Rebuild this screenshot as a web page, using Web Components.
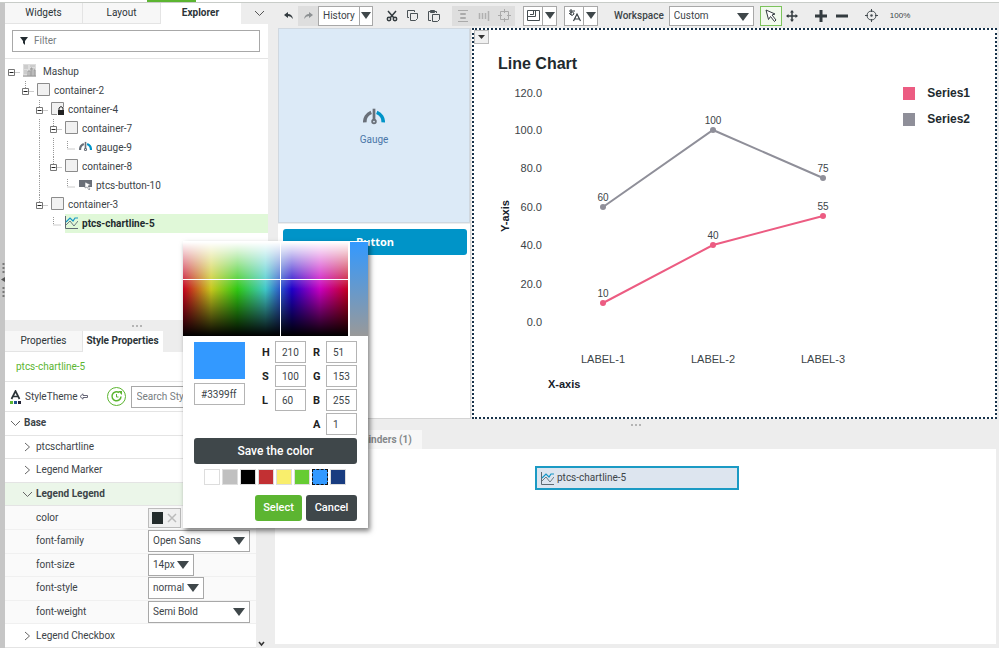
<!DOCTYPE html>
<html lang="en">
<head>
<meta charset="utf-8">
<meta name="viewport" content="width=device-width, initial-scale=1">
<title>Mashup Builder</title>
<style>
html, body {
  margin: 0;
  height: 100%;
}
body {
  --ink: #3c4448;
  --line: #e4e4e4;
  --field: #a8a8a8;
  --shade: #ededed;
  --green: #5cb531;
  --green-bg: #ebf6e9;
  --blue: #0094c8;
  --dark: #3f474a;
  font: 10px/14px Roboto, "Liberation Sans", sans-serif;
  color: var(--ink);
  background: var(--shade);
  overflow: hidden;
}
</style>
</head>
<body>
<mashup-builder></mashup-builder>

<script>
const baseStyles = `
* { box-sizing: border-box; }
button, input, select { font: inherit; color: inherit; margin: 0; }
button { padding: 0; border: 0; background: none; }
svg { display: block; flex: none; }
`;

const dropStyles = `
.drop { position: relative; display: flex; }
.drop select {
  appearance: none;
  width: 100%;
  height: 22px;
  padding: 0 16px 0 4px;
  border: 1px solid var(--field);
  border-radius: 0;
  background: #fff;
}
.drop:after {
  content: '';
  position: absolute;
  right: 5px;
  top: 7px;
  border: 6px solid transparent;
  border-top: 8px solid var(--dark);
  border-bottom: 0;
  pointer-events: none;
}
`;

const icons = {
  mashup: `<svg width="13" height="13"><path d="M0 0h13v13H0z" fill="#ddd"/><path d="M1 2h4M7 2h5M1 4h4M7 5h5M1 7h3M1 9h3" stroke="#bbb"/><path d="M5 12V7h2v5M8 12V4h1v8M11 12V6h1v6M0 12h13" stroke="#999" fill="none"/></svg>`,
  container: `<svg width="13" height="13"><path d="M.5.5h12v12H.5z" fill="#f1f1f1" stroke="#8b8b8b"/></svg>`,
  locked: `<svg width="13" height="13"><path d="M6 12.500H.5V.5h12v5" fill="#f1f1f1" stroke="#8b8b8b"/><path d="M7 8h6v5H7z" fill="#222"/><path d="M8 9V6q2-3 4 0v3" fill="none" stroke="#222"/></svg>`,
  gauge: `<svg width="13" height="13" viewBox="0 0 24 17"><path d="M2 15A11 11 0 0 1 9 4" fill="none" stroke="#6a7079" stroke-width="4"/><path d="M15 4a11 11 0 0 1 7 11" fill="none" stroke="#0094c8" stroke-width="4"/><path d="M12 0v12" stroke="#6a7079" stroke-width="3"/><circle cx="12" cy="14" r="2" fill="none" stroke="#6a7079" stroke-width="2"/></svg>`,
  button: `<svg width="13" height="10"><path d="M0 0h13v7H0z" fill="#6a6f78"/><path d="M6 2l6 3-3 1 2 3-1 1-2-3-2 1z" fill="#fff" stroke="#6a6f78" stroke-width=".6"/></svg>`,
  chart: `<svg width="13" height="13"><path d="M.5 0v12.500H13" fill="none" stroke="#5f6a72"/><path d="M1 6l4-4 3 3 2-3h3" fill="none" stroke="#1696c6" stroke-width="1.200"/><path d="M1 9l4-4 4 5 4-5" fill="none" stroke="#6c7a80"/></svg>`,
  filter: `<svg width="8" height="8"><path d="M0 0h8L5 4v4L3 6V4z" fill="#222b30"/></svg>`,
  chevron: `<svg width="11" height="7"><path d="M1 1l4.500 4.500L10 1" fill="none" stroke="#555"/></svg>`,
  right: `<svg width="11" height="10"><path d="M3 1l4.500 4L3 9" fill="none" stroke="#666"/></svg>`,
  down: `<svg width="11" height="10"><path d="M1 3l4.500 4.500L10 3" fill="none" stroke="#666"/></svg>`,
  undo: `<svg width="9" height="8"><path d="M0 3l4-3v2q4 0 5 5-2-3-5-3v2z" fill="#333b3f"/></svg>`,
  redo: `<svg width="9" height="8"><path d="M9 3L5 0v2Q1 2 0 7q2-3 5-3v2z" fill="#8d9193"/></svg>`,
  cut: `<svg width="12" height="12"><g fill="none" stroke="#333b3f" stroke-width="1.500"><path d="M2 1l6 7M10 1L4 8"/><circle cx="3" cy="9" r="1.700"/><circle cx="9" cy="9" r="1.700"/></g></svg>`,
  copy: `<svg width="13" height="13"><g fill="none" stroke="#4a5256"><path d="M3 8.500H1.500v-7h7V3"/><path d="M4.500 4.500h7v5l-2 2h-5z"/></g></svg>`,
  paste: `<svg width="13" height="13"><g fill="none" stroke="#4a5256"><path d="M4 11.500H1.500v-9h2M8 2.500h1.500V4"/><path d="M3.500 1.500h4v2h-4z" fill="#4a5256"/><path d="M5.500 5.500h7v5l-2 2h-5z"/></g></svg>`,
  rows: `<svg width="12" height="12"><path d="M1 .5h10M1 11.500h10M3.500 3.500h5v1h-5zM3.500 7.500h5v1h-5z" stroke="#aaa" fill="none"/></svg>`,
  cols: `<svg width="12" height="12"><path d="M1.500 3v6M4.500 3v6M7.500 3v6M10.500 1v10" stroke="#b0b0b0" stroke-width="1.500"/></svg>`,
  center: `<svg width="13" height="13"><path d="M2.500 2.500h8v8h-8zM6.500 0v4M6.500 9v4M0 6.500h4M9 6.500h4" fill="none" stroke="#aaa"/></svg>`,
  panes: `<svg width="13" height="11"><path d="M.5.5h12v10H.5zM.5 6.500h8V.5M3 4.500h3.500V1" fill="none" stroke="#444c50"/></svg>`,
  lang: `<svg width="13" height="13"><path d="M1 2h6M3 0v6M1 5q4-4 5 0-2 3-4 0" fill="none" stroke="#333b3f"/><path d="M5.500 12L9 5l3.500 7M6.500 10h5" fill="none" stroke="#333b3f" stroke-width="1.200"/></svg>`,
  pointer: `<svg width="14" height="14"><path d="M2 1l9 4-3 1 4 5-1.500 1.500-4-5-2 3z" fill="#fff" stroke="#333b3f"/></svg>`,
  move: `<svg width="12" height="12"><path d="M6 1v10M1 6h10" stroke="#333b3f" stroke-width="1.500"/><path d="M6 0l2 2.500H4zM6 12l2-2.500H4zM0 6l2.500-2v4zM12 6L9.500 4v4z" fill="#333b3f"/></svg>`,
  plus: `<svg width="12" height="12"><path d="M6 0v12M0 6h12" stroke="#333b3f" stroke-width="3"/></svg>`,
  minus: `<svg width="12" height="12"><path d="M0 6h12" stroke="#333b3f" stroke-width="3"/></svg>`,
  target: `<svg width="13" height="13"><circle cx="6.500" cy="6.500" r="4.500" fill="none" stroke="#444c50"/><circle cx="6.500" cy="6.500" r="1.200" fill="#444c50"/><path d="M6.500 0v3M6.500 10v3M0 6.500h3M10 6.500h3" stroke="#444c50"/></svg>`,
  refresh: `<svg width="19" height="19"><circle cx="9.500" cy="9.500" r="9" fill="none" stroke="#5cb531"/><path d="M12 5.600A4.500 4.500 0 1 0 14 9.500" fill="none" stroke="#5cb531" stroke-width="1.500"/><path d="M11 4h4v4z" fill="#5cb531"/><path d="M9.500 7v3h2" fill="none" stroke="#5cb531"/></svg>`,
  theme: `<svg width="11" height="14"><path d="M1.500 9L5.500 1l4 8M3 6.500h5" fill="none" stroke="#2a3337" stroke-width="1.700"/><path d="M0 11h3v3H0z" fill="#5cb531"/><path d="M4 11h3v3H4z" fill="#1f4f8f"/><path d="M8 11h3v3H8z" fill="#223"/></svg>`,
  back: `<svg width="9" height="7"><path d="M8.500 2.500H4V.8L1 3.500l3 2.700V4.500h4.500z" fill="none" stroke="#667"/></svg>`,
  caret: `<svg width="10" height="7"><path d="M0 0h10L5 7z" fill="#3f474a"/></svg>`
};

function dropDown(id, value, label) {
  const aria = label ? ` aria-label="${label}"` : '';
  return `<span class="drop"><select id="${id}"${aria}><option>${value}</option></select></span>`;
}

function define(name, render) {
  customElements.define(name, class extends HTMLElement {
    constructor() {
      super();
      this.attachShadow({mode: 'open'});
    }

    connectedCallback() {
      const template = document.createElement('template');
      template.innerHTML = `<style>${baseStyles}</style>` + render(this);
      this.shadowRoot.replaceChildren(template.content.cloneNode(true));
    }
  });
}

// items="a|b|c", selected="index"
define('tab-bar', el => {
  const selected = Number(el.getAttribute('selected'));
  const tabs = el.getAttribute('items').split('|').map((text, i) =>
    `<button role="tab" aria-selected="${i === selected}">${text}</button>`).join('');
  return `
<style>
:host { display: flex; flex: none; height: 21px; background: var(--shade); }
[role=tablist] { display: flex; }
button {
  width: 78px;
  border-right: 1px solid var(--line);
  border-bottom: 1px solid var(--line);
  background: #f7f7f7;
  color: #2c3438;
}
button[aria-selected=true] {
  width: 80px;
  background: #fff;
  border-color: #fff;
  font-weight: bold;
}
::slotted(*) { margin: auto; }
</style>
<div role="tablist">${tabs}</div><slot></slot>`;
});

define('app-icon', el => `
<style>:host { display: inline-flex; }</style>
${icons[el.getAttribute('name')]}`);

// The gutter holds the dotted guides, the toggle and the elbow.
define('tree-row', el => {
  const level = Number(el.getAttribute('level'));
  const width = level * 14 + 18;
  const x = level * 14 + 6.5;
  const dots = 'stroke="#999" stroke-dasharray="1 1" fill="none"';
  const guides = (el.getAttribute('guides') || '').split(' ').filter(Boolean)
    .map(n => `<path d="M${n * 14 + 6.5} 0v19" ${dots}/>`).join('');
  const mark = el.hasAttribute('leaf')
    ? `<path d="M${x} 3v8h8" ${dots}/>`
    : `${level ? `<path d="M${x} 0v7" ${dots}/>` : ''}
       <path d="M${x + 3} 10.500h5" ${dots}/>
       <path d="M${x - 3} 7.500h6v6h-6z" fill="#fff" stroke="#777"/><path d="M${x - 2} 10.500h4" stroke="#222"/>`;
  return `
<style>
:host { display: flex; height: 19px; }
.item { display: flex; align-items: center; gap: 4px; flex: 1; }
.item svg { margin-bottom: 2px; }
:host([root]) .item { gap: 7px; }
:host([selected]) .item { background: #e0f8d8; font-weight: bold; color: #222a2e; }
</style>
<svg width="${width}" height="19">${guides}${mark}</svg>
<div class="item">${icons[el.getAttribute('icon')]}<slot></slot></div>`;
});

define('explorer-panel', () => `
<style>
:host { display: flex; flex-direction: column; }
.body { flex: 1; margin-right: 10px; background: #fff; }
.search { padding: 6px 8px 6px 7px; }
.filter {
  display: flex;
  align-items: center;
  gap: 6px;
  height: 22px;
  padding: 0 7px;
  border: 1px solid var(--field);
}
input { flex: 1; min-width: 0; border: 0; padding: 0; outline: 0; background: none; }
input::placeholder { color: #777d80; }
.tree { padding-top: 3px; border-top: 1px solid var(--line); }
</style>
<tab-bar items="Widgets|Layout|Explorer" selected="2"><app-icon name="chevron"></app-icon></tab-bar>
<div class="body">
  <div class="search">
    <label class="filter">${icons.filter}<input placeholder="Filter" aria-label="Filter"></label>
  </div>
  <div class="tree">
    <tree-row level="0" icon="mashup" root>Mashup</tree-row>
    <tree-row level="1" icon="container">container-2</tree-row>
    <tree-row level="2" icon="locked">container-4</tree-row>
    <tree-row level="3" icon="container" guides="2">container-7</tree-row>
    <tree-row level="4" icon="gauge" guides="2 3" leaf>gauge-9</tree-row>
    <tree-row level="3" icon="container" guides="2">container-8</tree-row>
    <tree-row level="4" icon="button" guides="2" leaf>ptcs-button-10</tree-row>
    <tree-row level="2" icon="container">container-3</tree-row>
    <tree-row level="3" icon="chart" leaf selected>ptcs-chartline-5</tree-row>
  </div>
</div>`);

define('split-bar', () => `
<style>
:host {
  display: flex;
  align-items: center;
  justify-content: center;
  flex: none;
  height: 11px;
  padding-right: 10px;
}
:host([wide]) { padding-right: 5px; }
</style>
<svg width="10" height="2"><path d="M0 1h2M4 1h2M8 1h2" stroke="#b4b4b4" stroke-width="2"/></svg>`);

define('prop-group', el => `
<style>
:host {
  display: flex;
  align-items: center;
  flex: 1;
  gap: 3px;
  padding-left: 17px;
  border-bottom: 1px solid var(--line);
}
:host([top]) { padding-left: 5px; }
:host([open]) { font-weight: bold; }
:host([active]) { background: var(--green-bg); }
</style>
${el.hasAttribute('open') ? icons.down : icons.right}<slot></slot>`);

define('prop-row', el => {
  const name = el.getAttribute('name');
  const field = el.hasAttribute('swatch')
    ? `<button id="field" class="swatch"><i></i><svg width="10" height="10"><path d="M1 1l8 8M9 1L1 9" stroke="#bbb" stroke-width="1.500"/></svg></button>`
    : dropDown('field', el.getAttribute('value'));
  return `
<style>
${dropStyles}
:host {
  display: grid;
  grid-template-columns: 112px auto;
  justify-content: start;
  align-items: center;
  flex: 1;
  padding-left: 31px;
  background: #fafafa;
  border-bottom: 1px solid #f0f0f0;
}
.drop { width: var(--field-width, 102px); }
.swatch {
  display: flex;
  align-items: center;
  gap: 4px;
  width: 33px;
  height: 20px;
  padding: 0 3px;
  border: 1px solid #bbb;
  background: #f0f0f0;
}
i { width: 12px; height: 12px; background: #232b2b; }
</style>
<label for="field">${name}</label>${field}`;
});

define('style-panel', () => `
<style>
:host { display: flex; flex-direction: column; }
.body { display: flex; flex-direction: column; flex: 1; margin-right: 22px; background: #fff; }
.name {
  padding: 8px 11px 7px;
  border-bottom: 1px solid var(--line);
  color: var(--green);
}
.tools {
  display: flex;
  align-items: center;
  height: 30px;
  padding-left: 5px;
  border-bottom: 1px solid var(--line);
}
.tools span { margin: 0 1px 0 4px; }
.tools button { margin: 0 5px 0 19px; }
input { flex: 1; min-width: 0; height: 22px; padding: 0 5px; border: 1px solid var(--field); }
input::placeholder { color: #777d80; }
.props { display: flex; flex-direction: column; flex: 1; }
</style>
<split-bar></split-bar>
<tab-bar items="Properties|Style Properties" selected="1"></tab-bar>
<div class="body">
  <div class="name">ptcs-chartline-5</div>
  <div class="tools">
    ${icons.theme}<span>StyleTheme</span>${icons.back}
    <button aria-label="Refresh">${icons.refresh}</button>
    <input placeholder="Search Style Properties" aria-label="Search">
  </div>
  <div class="props">
    <prop-group top open>Base</prop-group>
    <prop-group>ptcschartline</prop-group>
    <prop-group>Legend Marker</prop-group>
    <prop-group open active>Legend Legend</prop-group>
    <prop-row name="color" swatch></prop-row>
    <prop-row name="font-family" value="Open Sans"></prop-row>
    <prop-row name="font-size" value="14px" style="--field-width:46px"></prop-row>
    <prop-row name="font-style" value="normal" style="--field-width:56px"></prop-row>
    <prop-row name="font-weight" value="Semi Bold"></prop-row>
    <prop-group>Legend Checkbox</prop-group>
  </div>
</div>`);

define('tool-bar', () => {
  const tool = (name, label, attrs = '') => `<button aria-label="${label}" ${attrs}>${icons[name]}</button>`;
  return `
<style>
${dropStyles}
:host { display: flex; align-items: center; flex: none; height: 25px; }
button { display: flex; align-items: center; justify-content: center; width: 21px; height: 20px; }
.group { display: flex; align-items: center; margin-right: 8px; }
button:disabled { background: #dedede; }
.edit button { width: 20px; }
.combo { margin-right: 7px; }
.combo button { width: 20px; border: 1px solid var(--field); background: #fff; }
.combo button + button { width: 15px; margin-left: -1px; }
.history, .workspace { display: block; }
.history { display: flex; }
.drop select { height: 20px; }
.history .drop { width: 42px; }
.history .drop:after { display: none; }
.history select { padding-right: 0; }
.history button { width: 14px; margin-left: -1px; border: 1px solid var(--field); background: #fff; }
.workspace { width: 85px; margin: 0 6px 0 5px; }
label { margin-left: 9px; font-weight: 500; }
.on { width: 22px; border: 1px solid #7cc35c; background: #f2faee; }
output { font: 8px/12px "Liberation Sans", sans-serif; }
</style>
<div class="group edit">
  ${tool('undo', 'Undo')}${tool('redo', 'Redo', 'disabled')}
  <span class="history">${dropDown('history', 'History', 'History')}<button aria-label="Open history">${icons.caret}</button></span>
</div>
<div class="group">${tool('cut', 'Cut')}${tool('copy', 'Copy')}${tool('paste', 'Paste')}</div>
<div class="group">${tool('rows', 'Align rows', 'disabled')}${tool('cols', 'Align columns', 'disabled')}${tool('center', 'Center', 'disabled')}</div>
<div class="group combo">${tool('panes', 'Panels')}${tool('caret', 'More panels')}</div>
<div class="group combo">${tool('lang', 'Language')}${tool('caret', 'More languages')}</div>
<label for="workspace">Workspace</label>
<span class="workspace">${dropDown('workspace', 'Custom')}</span>
<div class="group">${tool('pointer', 'Select', 'class="on"')}${tool('move', 'Move')}</div>
<div class="group">${tool('plus', 'Zoom in')}${tool('minus', 'Zoom out')}</div>
<div class="group">${tool('target', 'Fit')}</div>
<output>100%</output>`;
});

define('gauge-widget', () => `
<style>
:host {
  display: flex;
  flex-direction: column;
  align-items: center;
  justify-content: center;
  gap: 8px;
  padding-top: 4px;
  color: #4a76a8;
  background: #dceaf7;
  border: 1px solid #d0d8e0;
}
svg { width: 22px; height: 17px; }
</style>
${icons.gauge}<span><slot></slot></span>`);

define('line-chart', () => {
  const xs = [105, 215, 325];
  const scaleY = value => Math.round(240 - value * 1.92);
  const ticks = [0, 20, 40, 60, 80, 100, 120];
  const series = [
    {name: 'Series1', color: '#ec5c82', values: [10, 40, 55]},
    {name: 'Series2', color: '#8f8f99', values: [60, 100, 75]}
  ];
  const axis = ticks.map(t =>
    `<text x="44" y="${t === 120 ? 15 : scaleY(t) + 4}" text-anchor="end">${t.toFixed(1)}</text>`).join('');
  const labels = xs.map((x, i) =>
    `<text x="${x}" y="281" text-anchor="middle">LABEL-${i + 1}</text>`).join('');
  const lines = series.map(s => `
    <polyline points="${s.values.map((v, i) => `${xs[i]},${scaleY(v)}`).join(' ')}" fill="none" stroke="${s.color}" stroke-width="2"/>
    ${s.values.map((v, i) => `
      <circle cx="${xs[i]}" cy="${scaleY(v)}" r="3" fill="${s.color}"/>
      <text class="value" x="${xs[i]}" y="${scaleY(v) - 6}" text-anchor="middle">${v}</text>`).join('')}`).join('');
  const legend = series.map(s => `<li><i style="background:${s.color}"></i>${s.name}</li>`).join('');
  return `
<style>
:host {
  position: relative;
  display: block;
  padding: 24px 25px 0 24px;
  border: 2px dotted #17324a;
  background: #fff;
  font-family: "Liberation Sans", sans-serif;
  color: #222a2e;
}
.menu {
  position: absolute;
  left: 0;
  top: 0;
  width: 15px;
  height: 14px;
  display: flex;
  align-items: center;
  justify-content: center;
  border: 1px solid #bbb;
  background: #f0f0f0;
}
h2 { margin: 0; font-size: 16px; line-height: 20px; }
.chart { display: grid; grid-template-columns: 1fr 67px; padding-top: 8px; }
.plot { width: 100%; }
text { font-size: 11px; fill: #3c4448; }
text.value { font-size: 10px; }
text.title { font-weight: bold; fill: #16202a; }
ul { display: flex; flex-direction: column; gap: 12px; margin: 0; padding: 4px 0; list-style: none; }
li { display: flex; align-items: center; gap: 12px; font-size: 12px; line-height: 14px; font-weight: bold; }
i { width: 13px; height: 13px; }
</style>
<button class="menu" aria-label="Widget menu"><svg width="7" height="4"><path d="M0 0h7L3.500 4z" fill="#333"/></svg></button>
<h2>Line Chart</h2>
<div class="chart">
  <svg class="plot" viewBox="0 0 405 310">
    ${axis}${labels}${lines}
    <text class="title" x="50" y="306">X-axis</text>
    <text class="title" transform="translate(11 134) rotate(-90)" text-anchor="middle">Y-axis</text>
  </svg>
  <ul>${legend}</ul>
</div>`;
});

define('mashup-canvas', () => `
<style>
:host { display: grid; grid-template-columns: 193px 1fr; gap: 1px; padding-right: 2px; }
.left { display: grid; grid-template-rows: 1fr 1fr; gap: 1px; border: solid #d4d4d4; border-width: 0 1px 1px 0; }
.cell { padding: 5px 3px 0 5px; background: #fff; }
.cell button {
  width: 100%;
  height: 26px;
  border-radius: 3px;
  background: var(--blue);
  color: #fff;
  font: bold 11px/14px "Open Sans", sans-serif;
}
</style>
<div class="left">
  <gauge-widget>Gauge</gauge-widget>
  <div class="cell"><button>Button</button></div>
</div>
<line-chart></line-chart>`);

define('binding-panel', () => `
<style>
:host { display: block; }
.tabs { display: flex; height: 19px; padding-left: 63px; }
.tabs button { padding: 0 10px; background: #f7f7f7; color: #85898b; font-weight: bold; }
.body {
  height: 195px;
  margin: 0 3px 4px 0;
  padding: 17px 0 0 260px;
  background: #fff;
}
.node {
  display: flex;
  align-items: center;
  gap: 3px;
  width: 204px;
  height: 24px;
  padding-left: 4px;
  border: 2px solid #1b9ac4;
  background: #dde5ef;
}
</style>
<div class="tabs"><button>Reminders (1)</button></div>
<div class="body"><div class="node">${icons.chart}<span>ptcs-chartline-5</span></div></div>`);

define('color-picker', () => {
  const field = (name, value) => `<label for="${name}">${name}</label><input id="${name}" value="${value}">`;
  const saved = ['#ffffff', '#c0c0c0', '#000000', '#c23033', '#f9ee6c', '#66cc33', '#3399ff', '#193c80']
    .map(c => `<button aria-label="${c}" style="background:${c}"${c === '#3399ff' ? ' class="on"' : ''}></button>`).join('');
  return `
<style>
:host { display: block; background: #fff; box-shadow: 2px 3px 5px rgba(0, 0, 0, .5); }
.spectrum { display: flex; gap: 2px; height: 95px; padding-top: 1px; }
.hue {
  flex: 1;
  background:
    linear-gradient(#fff, #fff) 97px 0 / 1px 100% no-repeat,
    linear-gradient(#fff, #fff) 0 37px / 100% 1px no-repeat,
    linear-gradient(#fff, rgba(255, 255, 255, 0) 50%, rgba(0, 0, 0, 0) 50%, #000),
    linear-gradient(90deg, #c4001e, #c8c81e 17%, #30c814 33%, #40c8c8 50%, #1e00c8 66%, #c800c0 83%, #c4001e);
}
.light { width: 18px; background: linear-gradient(#3399ff, #999); }
.body { display: flex; flex-direction: column; padding: 5px 11px 7px; }
.values { display: grid; grid-template-columns: 51px 1fr auto; }
.preview { height: 37px; margin: 1px 0 4px; background: #3399ff; }
input { width: 100%; height: 22px; padding: 0 6px; border: 1px solid #b4b4b4; }
.fields {
  display: grid;
  grid-template-columns: 13px 31px 20px 31px;
  grid-column: 3;
  gap: 2px 0;
  align-items: center;
}
.fields label { padding-top: 2px; font-size: 11px; font-weight: bold; color: #222; }
.fields label:nth-of-type(even), .fields .last { padding-left: 7px; }
.last { grid-column: 3; }
.save { height: 26px; margin: 3px 0 5px; border-radius: 3px; background: var(--dark); color: #fff; font-size: 12px; font-weight: 500; }
.saved { display: flex; justify-content: center; gap: 2px; padding-right: 1px; }
.saved button { width: 16px; height: 16px; border: 1px solid #ddd; }
.saved .on { border: 1px dashed #111; }
.actions { display: flex; justify-content: flex-end; gap: 4px; padding-top: 10px; }
.actions button { width: 51px; height: 26px; border-radius: 3px; background: var(--dark); color: #fff; font-size: 11px; font-weight: 500; }
.actions .select { width: 47px; background: var(--green); }
</style>
<div class="spectrum"><div class="hue"></div><div class="light"></div></div>
<div class="body">
  <div class="values">
    <div>
      <div class="preview"></div>
      <input value="#3399ff" aria-label="Hex">
    </div>
    <div class="fields">
      ${field('H', 210)}${field('R', 51)}
      ${field('S', 100)}${field('G', 153)}
      ${field('L', 60)}${field('B', 255)}
      <label class="last" for="A">A</label><input id="A" value="1">
    </div>
  </div>
  <button class="save">Save the color</button>
  <div class="saved">${saved}</div>
  <div class="actions"><button class="select">Select</button><button>Cancel</button></div>
</div>`;
});

define('mashup-builder', () => `
<style>
:host { display: flex; flex-direction: column; height: 100vh; }
.top { flex: none; height: 3px; background: #fff; border-bottom: 1px solid #c8ccc8; }
.top:before { content: ''; display: block; width: 49px; height: 2px; margin-left: 147px; background: var(--green); }
.main { display: grid; grid-template-columns: 5px 273px 1fr; flex: 1; min-height: 0; }
.rail { display: flex; align-items: center; padding-bottom: 92px; background: #c6c6c6; }
.side {
  display: grid;
  grid-template-rows: 317px 1fr;
  grid-template-columns: minmax(0, 1fr);
  position: relative;
  min-height: 0;
}
.scroll { position: absolute; right: 13px; bottom: 1px; }
.work { display: flex; flex-direction: column; min-width: 0; }
mashup-canvas { flex: 1; }
binding-panel { margin-left: -3px; }
color-picker { position: absolute; left: 183px; top: 241px; width: 185px; }
</style>
<div class="top"></div>
<div class="main">
  <div class="rail"><svg width="5" height="34"><path d="M3.500 0v10M3.500 24v10" stroke="#777" stroke-width="2" stroke-dasharray="2 2"/><path d="M5 14v5L1 16.500z" fill="#555"/></svg></div>
  <div class="side">
    <explorer-panel></explorer-panel>
    <style-panel></style-panel>
    <svg class="scroll" width="7" height="6"><path d="M1 1l2.500 3L6 1" fill="none" stroke="#333" stroke-width="1.500"/></svg>
  </div>
  <div class="work">
    <tool-bar></tool-bar>
    <mashup-canvas></mashup-canvas>
    <split-bar wide></split-bar>
    <binding-panel></binding-panel>
  </div>
</div>
<color-picker role="dialog" aria-label="Color"></color-picker>`);
</script>
</body>
</html>
